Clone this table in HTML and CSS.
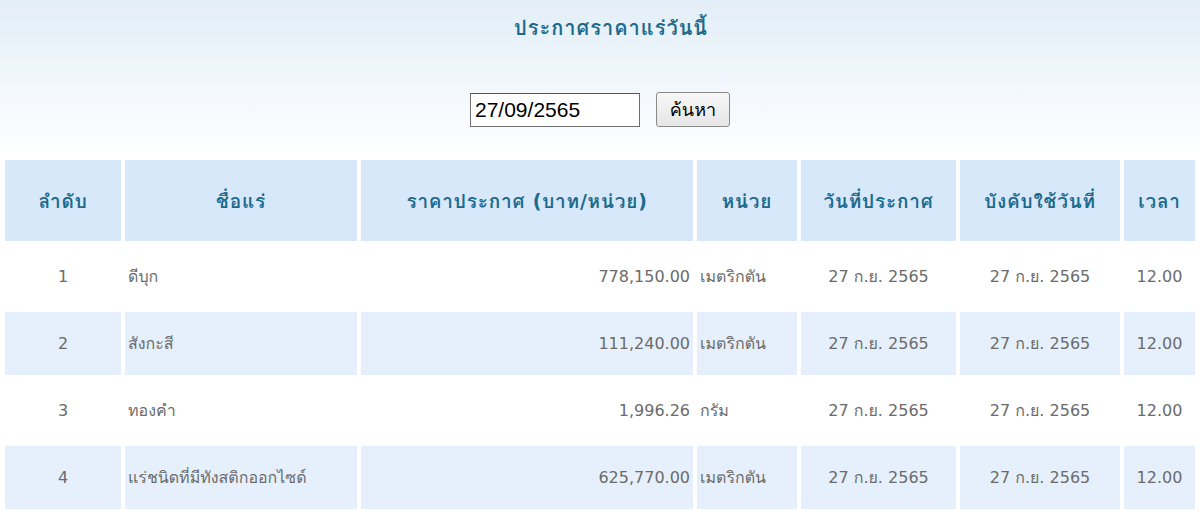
FILE: index.html
```html
<!DOCTYPE html>
<html lang="th">
<head>
<meta charset="utf-8">
<title>ประกาศราคาแร่วันนี้</title>
<link rel="stylesheet" href="styles.css">
</head>
<body>
<div class="page">
  <h1 class="title">ประกาศราคาแร่วันนี้</h1>
  <form class="search">
    <input class="date-input" type="text" value="27/09/2565">
    <button class="btn" type="button">ค้นหา</button>
  </form>
  <table class="price-table">
    <colgroup>
      <col class="c1"><col class="c2"><col class="c3"><col class="c4"><col class="c5"><col class="c6"><col class="c7">
    </colgroup>
    <thead>
      <tr>
        <th>ลำดับ</th>
        <th>ชื่อแร่</th>
        <th>ราคาประกาศ (บาท/หน่วย)</th>
        <th>หน่วย</th>
        <th>วันที่ประกาศ</th>
        <th>บังคับใช้วันที่</th>
        <th>เวลา</th>
      </tr>
    </thead>
    <tbody>
      <tr>
        <td class="center">1</td>
        <td class="left">ดีบุก</td>
        <td class="right">778,150.00</td>
        <td class="left">เมตริกตัน</td>
        <td class="center">27 ก.ย. 2565</td>
        <td class="center">27 ก.ย. 2565</td>
        <td class="center">12.00</td>
      </tr>
      <tr class="alt">
        <td class="center">2</td>
        <td class="left">สังกะสี</td>
        <td class="right">111,240.00</td>
        <td class="left">เมตริกตัน</td>
        <td class="center">27 ก.ย. 2565</td>
        <td class="center">27 ก.ย. 2565</td>
        <td class="center">12.00</td>
      </tr>
      <tr>
        <td class="center">3</td>
        <td class="left">ทองคำ</td>
        <td class="right">1,996.26</td>
        <td class="left">กรัม</td>
        <td class="center">27 ก.ย. 2565</td>
        <td class="center">27 ก.ย. 2565</td>
        <td class="center">12.00</td>
      </tr>
      <tr class="alt">
        <td class="center">4</td>
        <td class="left">แร่ชนิดที่มีทังสติกออกไซด์</td>
        <td class="right">625,770.00</td>
        <td class="left">เมตริกตัน</td>
        <td class="center">27 ก.ย. 2565</td>
        <td class="center">27 ก.ย. 2565</td>
        <td class="center">12.00</td>
      </tr>
    </tbody>
  </table>
</div>
</body>
</html>
```
FILE: styles.css
```css
html, body {
  margin: 0;
  padding: 0;
}
body {
  background: linear-gradient(to bottom, #e2eef7 0px, #f1f7fc 80px, #ffffff 160px, #ffffff 100%);
  font-family: "DejaVu Sans", Tahoma, "Loma", "Noto Sans Thai", sans-serif;
  color: #6b6b6b;
  min-height: 515px;
}
.page {
  display: flex;
  flex-direction: column;
  align-items: center;
}
.title {
  margin: 15px 0 0 22px;
  height: 26px;
  font-size: 20px;
  line-height: 26px;
  font-weight: bold;
  letter-spacing: 1px;
  color: #1d6a8c;
}
.search {
  display: flex;
  gap: 16px;
  align-items: center;
  margin: 51px 0 0 0;
}
.date-input {
  box-sizing: border-box;
  width: 170px;
  height: 34px;
  margin: 0;
  padding: 0 4px;
  border: 1px solid #6f6f6f;
  border-top-color: #555;
  font-family: "Liberation Sans", Arial, sans-serif;
  font-size: 21px;
  color: #000;
  background: #fff;
}
.btn {
  box-sizing: border-box;
  width: 74px;
  height: 35px;
  margin: 0;
  padding: 0;
  border: 1px solid #8a8a8a;
  border-radius: 3px;
  background: linear-gradient(#f7f7f7, #e6e6e6);
  font-family: "DejaVu Sans", Tahoma, "Loma", "Noto Sans Thai", sans-serif;
  font-size: 18px;
  color: #000;
}
.price-table {
  align-self: flex-start;
  margin: 29px 0 0 1px;
  width: 1198px;
  border-collapse: separate;
  border-spacing: 4px;
  table-layout: fixed;
}
.c1 { width: 116px; }
.c2 { width: 232px; }
.c3 { width: 332px; }
.c4 { width: 100px; }
.c5 { width: 155px; }
.c6 { width: 160px; }
.c7 { width: 71px; }
.price-table th {
  height: 81px;
  padding: 0;
  background: #d6e8fa;
  color: #1d6a8c;
  font-size: 19px;
  font-weight: bold;
  letter-spacing: 0.8px;
  text-align: center;
  vertical-align: middle;
}
.price-table td {
  height: 63px;
  padding: 0 3px;
  font-size: 16px;
  color: #6b6b6b;
  vertical-align: middle;
  white-space: nowrap;
}
.price-table tr.alt td {
  background: #e6f0fc;
}
.center { text-align: center; }
.left { text-align: left; }
.right { text-align: right; }
```
